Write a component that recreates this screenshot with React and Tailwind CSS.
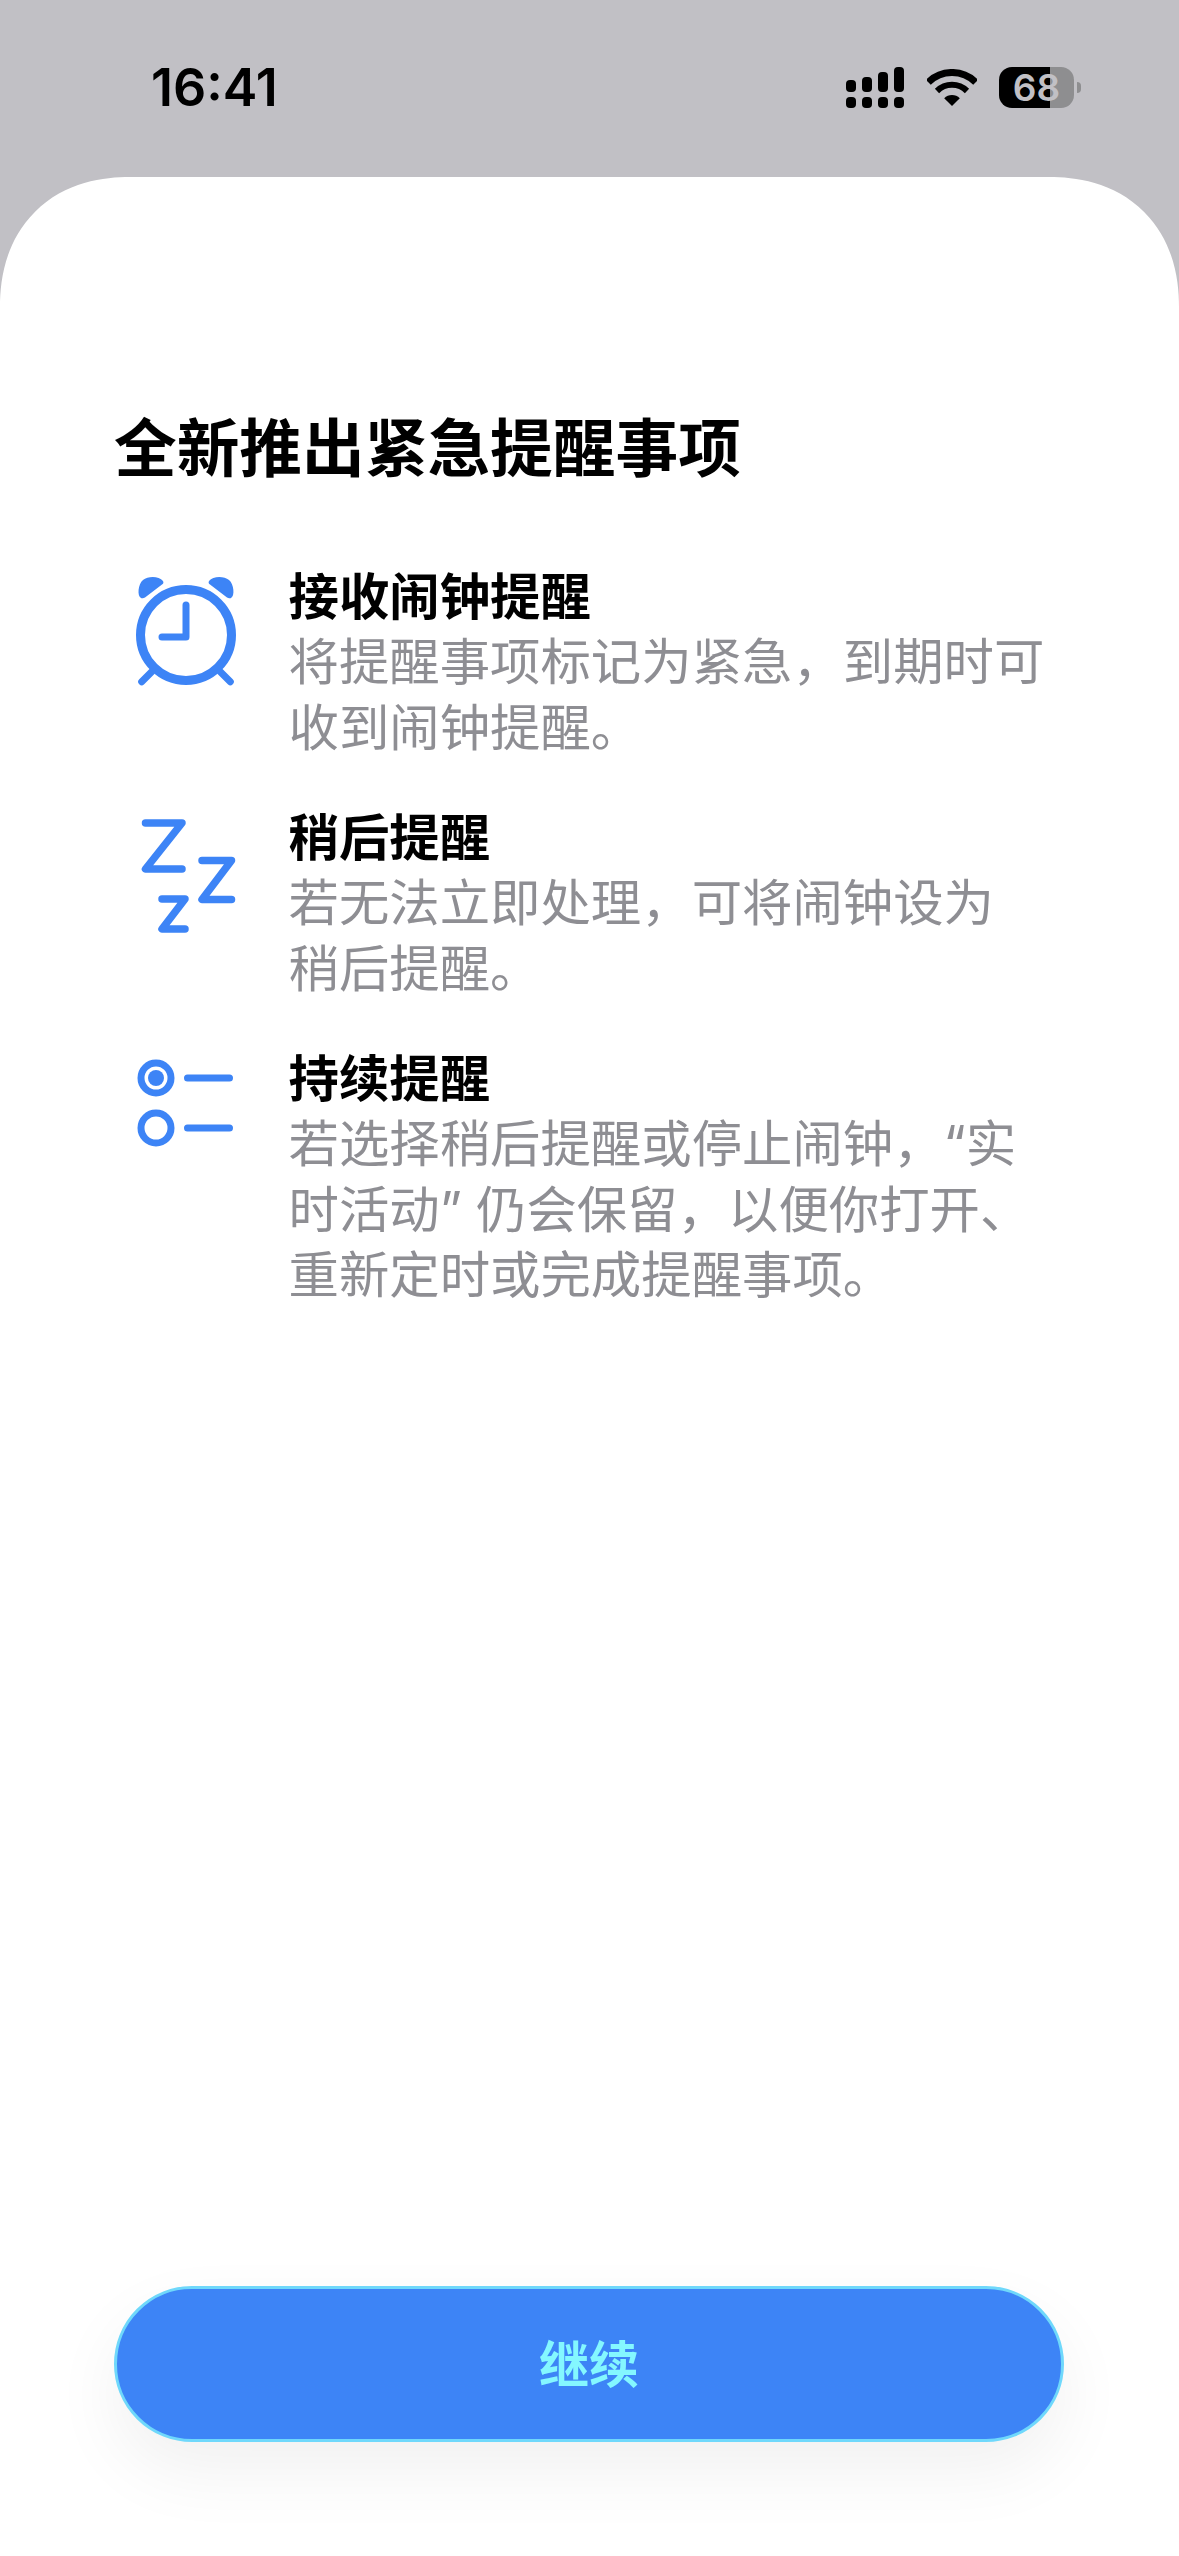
const fontStack = "font-['Inter','Noto_Sans_CJK_SC',sans-serif]";

function SignalIcon() {
  return (
    <svg width="58" height="41" viewBox="0 0 58 41" fill="#000">
      <rect x="0" y="13" width="10" height="12" rx="4" />
      <rect x="16" y="10" width="10" height="15" rx="4" />
      <rect x="32" y="5" width="10" height="20" rx="4" />
      <rect x="48" y="0" width="10" height="25" rx="4" />
      <rect x="0" y="30" width="10" height="11" rx="4" />
      <rect x="16" y="30" width="10" height="11" rx="4" />
      <rect x="32" y="30" width="10" height="11" rx="4" />
      <rect x="48" y="30" width="10" height="11" rx="4" />
    </svg>
  );
}

function WifiIcon() {
  return (
    <svg width="50" height="37" viewBox="0 0 50 37" fill="none" stroke="#000">
      <path d="M1.3 13.3A33.5 33.5 0 0 1 48.7 13.3" strokeWidth="7" />
      <path d="M10 22A21.3 21.3 0 0 1 40 22" strokeWidth="6" />
      <path d="M25 37L17.2 29.2A11 11 0 0 1 32.8 29.2Z" fill="#000" stroke="none" />
    </svg>
  );
}

function AlarmIcon() {
  return (
    <svg width="120" height="120" viewBox="0 0 120 120" fill="none" stroke="#3d84f6">
      <circle cx="60" cy="65" r="45.5" strokeWidth="9" />
      <path d="M60 35V67H36" strokeWidth="7" strokeLinecap="round" strokeLinejoin="round" />
      <path d="M15.7 111.7L25.7 101.7M104.3 111.7L94.3 101.7" strokeWidth="7" strokeLinecap="round" />
      <path d="M15 28C11 26 12 14 17 10C22 6 33 6 37 11C38 13 37 14 36 14.5L19 27.5C18 28 16 28.5 15 28Z" fill="#3d84f6" stroke="none" />
      <path d="M105 28C109 26 108 14 103 10C98 6 87 6 83 11C82 13 83 14 84 14.5L101 27.5C102 28 104 28.5 105 28Z" fill="#3d84f6" stroke="none" />
    </svg>
  );
}

function SnoozeIcon() {
  return (
    <svg width="120" height="130" viewBox="0 0 120 130" fill="none" stroke="#3d84f6" strokeWidth="7.5" strokeLinecap="round" strokeLinejoin="round">
      <path d="M19.5 13H56L19.5 59H56" />
      <path d="M76 50.5H105.5L76 89.5H105.5" />
      <path d="M36 89H59L36 119H59" />
    </svg>
  );
}

function ListIcon() {
  return (
    <svg width="120" height="120" viewBox="0 0 120 120" fill="none" stroke="#3d84f6" strokeWidth="7">
      <circle cx="30" cy="37" r="15" />
      <circle cx="30" cy="37" r="8" fill="#3d84f6" stroke="none" />
      <circle cx="30" cy="87" r="15" />
      <path d="M61.5 37H103.5M61.5 87H103.5" strokeLinecap="round" />
    </svg>
  );
}

const features = [
  {
    icon: <AlarmIcon />,
    iconClass: "mt-[6px]",
    title: "接收闹钟提醒",
    lines: ["将提醒事项标记为紧急，到期时可", "收到闹钟提醒。"],
  },
  {
    icon: <SnoozeIcon />,
    iconClass: "mt-[5px]",
    title: "稍后提醒",
    lines: ["若无法立即处理，可将闹钟设为", "稍后提醒。"],
  },
  {
    icon: <ListIcon />,
    iconClass: "mt-[-5px]",
    title: "持续提醒",
    lines: ["若选择稍后提醒或停止闹钟，“实", "时活动” 仍会保留，以便你打开、", "重新定时或完成提醒事项。"],
  },
];

export default function App() {
  return (
    <div className={`flex h-[2556px] w-[1179px] flex-col overflow-hidden bg-[#c1c0c5] ${fontStack}`}>
      {/* Status bar */}
      <div className="flex h-[177px] shrink-0 items-start justify-between pl-[151px] pr-[98px] pt-[67px]">
        <span className="text-[52px] font-semibold leading-[41px] text-black">16:41</span>
        <div className="flex items-center">
          <SignalIcon />
          <div className="ml-[23px]">
            <WifiIcon />
          </div>
          <div className="ml-[22px] flex h-[41px] w-[75px] items-center justify-center rounded-[13px] bg-[linear-gradient(90deg,#000_68%,#8e8e90_68%)] text-[37px] font-semibold text-[#c1c0c5]">
            68
          </div>
          <div className="ml-[3px] h-[11px] w-[4px] rounded-r-full bg-[#8e8e90]" />
        </div>
      </div>

      {/* Sheet */}
      <div className="flex flex-1 flex-col rounded-t-[130px] bg-white px-[114px] pb-[114px] [corner-shape:superellipse(1.15)]">
        <h1 className="mt-[227px] text-[62.7px] font-bold leading-[88px] text-black">全新推出紧急提醒事项</h1>

        <div className="mt-[72px] flex flex-col gap-[45px]">
          {features.map((f) => (
            <div key={f.title} className="flex">
              <div className={`ml-[12px] w-[162.5px] shrink-0 ${f.iconClass}`}>{f.icon}</div>
              <div className="text-[50.4px]">
                <div className="font-bold leading-[66px] text-black">{f.title}</div>
                <div className="-mt-px leading-[65.5px] text-[#8e8e93]">
                  {f.lines.map((line) => (
                    <div key={line} className="whitespace-nowrap">
                      {line}
                    </div>
                  ))}
                </div>
              </div>
            </div>
          ))}
        </div>

        <button className="mt-auto flex h-[156px] w-[950px] items-center justify-center rounded-full border-[3px] border-[#6fd8fb] bg-[#3d84f6] pt-[2px] text-[50px] font-semibold text-[#84f7ff] shadow-[0_30px_70px_rgba(0,0,0,0.06)]">
          继续
        </button>
      </div>
    </div>
  );
}
